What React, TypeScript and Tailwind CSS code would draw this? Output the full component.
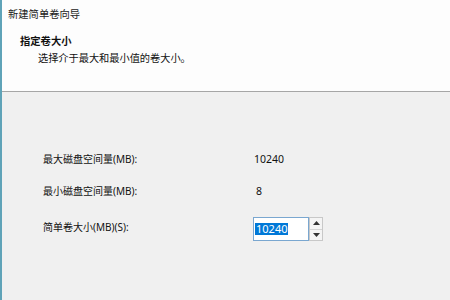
import React from "react";

const font = "font-['Noto_Sans','Noto_Sans_CJK_SC',sans-serif]";

const Spinner = () => (
  <div className="flex flex-col w-[14px] h-[24px] border border-[#c8c8c8] bg-[#f4f4f4]">
    <div className="flex-1 flex items-center justify-center border-b border-[#d4d4d4]">
      <svg width="7" height="4" viewBox="0 0 7 4">
        <path d="M0 4 L3.5 0 L7 4 Z" fill="#333" />
      </svg>
    </div>
    <div className="flex-1 flex items-center justify-center">
      <svg width="7" height="4" viewBox="0 0 7 4">
        <path d="M0 0 L3.5 4 L7 0 Z" fill="#333" />
      </svg>
    </div>
  </div>
);

export default function App() {
  return (
    <div className={`w-[450px] h-[300px] flex overflow-hidden text-[#111] ${font}`}>
      <div className="w-[2px] bg-[#5fa3b8]" />
      <div className="flex-1 flex flex-col">
        {/* header */}
        <div className="h-[92px] bg-[#fdfdfd] border-b border-[#a6a6a6]">
          <div className="pt-[7px] pl-[6px] text-[10.3px] leading-[14px] text-[#222]">
            新建简单卷向导
          </div>
          <div className="mt-[13px] pl-[18px] text-[10.3px] leading-[14px] font-bold">
            指定卷大小
          </div>
          <div className="mt-[3px] pl-[36px] text-[10.2px] leading-[14px]">
            选择介于最大和最小值的卷大小。
          </div>
        </div>
        {/* body */}
        <div className="flex-1 bg-[#f0f0f0] pt-[60px] pl-[41px] text-[10px] leading-[14px]">
          <div className="flex">
            <div className="w-[211px]">最大磁盘空间量(MB):</div>
            <div className="text-[10.5px]">10240</div>
          </div>
          <div className="flex mt-[18px]">
            <div className="w-[211px]">最小磁盘空间量(MB):</div>
            <div className="pl-[2px] text-[10.5px]">8</div>
          </div>
          <div className="flex items-center mt-[19px]">
            <div className="w-[210px] pb-[4px]">简单卷大小(MB)(S):</div>
            <div className="flex items-center">
              <div className="w-[56px] h-[24px] border border-[#7aa7d0] bg-white flex items-center pl-[1px]">
                <span className="bg-[#0078d7] text-white text-[11px] leading-[12px] px-[1px]">10240</span>
              </div>
              <Spinner />
            </div>
          </div>
        </div>
      </div>
    </div>
  );
}
